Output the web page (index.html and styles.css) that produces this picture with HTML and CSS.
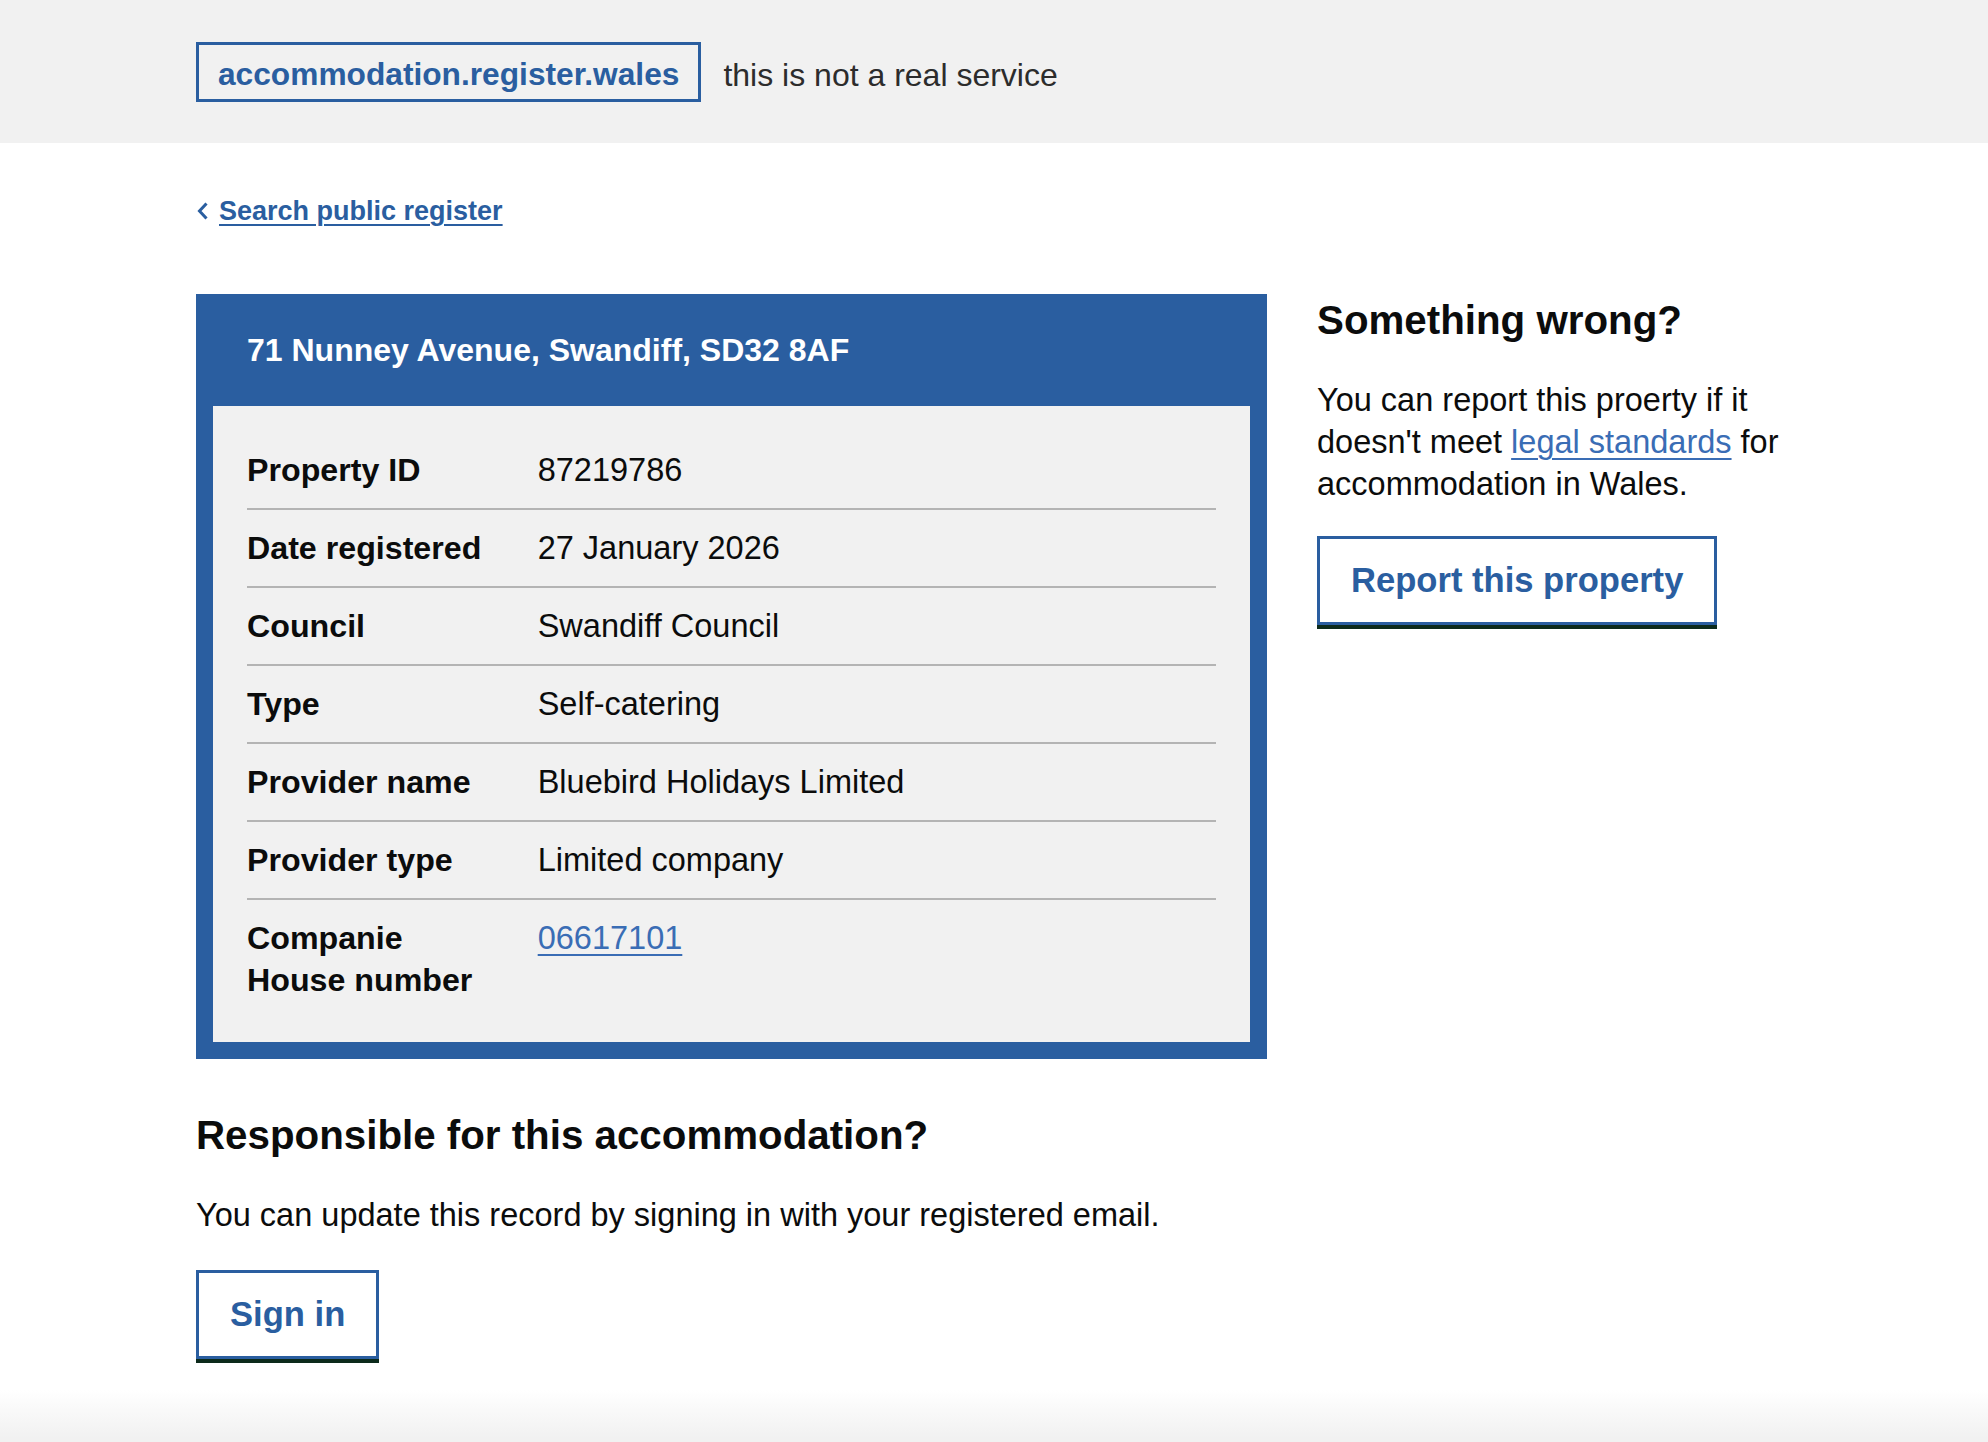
FILE: index.html
```html
<!DOCTYPE html>
<html lang="en">
<head>
<meta charset="utf-8">
<title>71 Nunney Avenue, Swandiff, SD32 8AF</title>
<link rel="stylesheet" href="styles.css">
</head>
<body>
<header class="site-header">
  <div class="container header-inner">
    <a class="logo" href="#">accommodation.register.wales</a>
    <span class="tagline">this is not a real service</span>
  </div>
</header>
<main class="container">
  <a class="back-link" href="#"><svg class="chevron" width="13" height="22" viewBox="0 0 13 22" aria-hidden="true"><polyline points="10.5,3.5 3.5,11 10.5,18.5" fill="none" stroke="#2a5ea0" stroke-width="3"/></svg><span class="back-text">Search public register</span></a>
  <div class="layout">
    <div class="main-col">
      <section class="card">
        <h1 class="card-title">71 Nunney Avenue, Swandiff, SD32 8AF</h1>
        <dl class="summary">
          <div class="row"><dt>Property ID</dt><dd>87219786</dd></div>
          <div class="row"><dt>Date registered</dt><dd>27 January 2026</dd></div>
          <div class="row"><dt>Council</dt><dd>Swandiff Council</dd></div>
          <div class="row"><dt>Type</dt><dd>Self-catering</dd></div>
          <div class="row"><dt>Provider name</dt><dd>Bluebird Holidays Limited</dd></div>
          <div class="row"><dt>Provider type</dt><dd>Limited company</dd></div>
          <div class="row last"><dt>Companie House number</dt><dd><a class="link" href="#">06617101</a></dd></div>
        </dl>
      </section>
      <h2 class="heading heading-gap">Responsible for this accommodation?</h2>
      <p class="body">You can update this record by signing in with your registered email.</p>
      <a class="button" href="#">Sign in</a>
    </div>
    <aside class="side-col">
      <h2 class="heading">Something wrong?</h2>
      <p class="body side-body">You can report this proerty if it doesn't meet <a class="link" href="#">legal standards</a> for accommodation in Wales.</p>
      <a class="button" href="#">Report this property</a>
    </aside>
  </div>
</main>
<footer class="site-footer"></footer>
</body>
</html>
```

FILE: styles.css
```css
html, body {
  margin: 0;
  padding: 0;
  background: #ffffff;
}

body {
  font-family: "Liberation Sans", Arial, Helvetica, sans-serif;
  color: #0b0c0c;
}

.container {
  width: 1596px;
  margin: 0 auto;
}

.site-header {
  background: #f1f1f1;
  height: 143px;
}

.header-inner {
  height: 143px;
  display: flex;
  align-items: center;
}

.logo {
  display: inline-block;
  border: 3px solid #2a5ea0;
  padding: 8px 19px 4px 19px;
  font-weight: 700;
  font-size: 31.7px;
  line-height: 42px;
  color: #2a5ea0;
  text-decoration: none;
}

.tagline {
  margin-left: 22px;
  padding-top: 6px;
  font-size: 32px;
  line-height: 42px;
  color: #2c2c2c;
}

.back-link {
  display: inline-flex;
  align-items: center;
  margin-top: 51px;
  font-weight: 700;
  font-size: 27px;
  line-height: 34px;
  color: #2a5ea0;
  text-decoration: none;
}

.chevron {
  display: block;
  margin-right: 10px;
}

.back-text {
  text-decoration: underline;
  text-decoration-thickness: 2px;
  text-underline-offset: 4px;
}

.layout {
  display: grid;
  grid-template-columns: 1071px 1fr;
  column-gap: 50px;
  align-items: start;
  margin-top: 66px;
}

.card {
  background: #2a5ea0;
  padding: 0 17px 17px 17px;
}

.card-title {
  margin: 0;
  padding: 35px 34px;
  font-size: 32px;
  line-height: 42px;
  font-weight: 700;
  color: #ffffff;
}

.summary {
  margin: 0;
  background: #f1f1f1;
  padding: 26px 34px 24px 34px;
}

.row {
  display: grid;
  grid-template-columns: 30% 70%;
  padding: 17px 0;
  border-bottom: 2px solid #b4b4b4;
}

.row.last {
  border-bottom: none;
}

.row dt {
  font-weight: 700;
  font-size: 32.2px;
  line-height: 42px;
  padding-right: 40px;
}

.row dd {
  margin: 0;
  font-size: 32.5px;
  line-height: 42px;
}

.link {
  color: #3a6db5;
  text-decoration: underline;
  text-decoration-thickness: 2px;
  text-underline-offset: 5px;
}

.side-col {
  padding-top: 2px;
}

.heading {
  margin: 0;
  font-size: 40.3px;
  line-height: 50px;
  font-weight: 700;
}

.heading-gap {
  margin-top: 52px;
}

.body {
  margin: 33px 0 34px 0;
  font-size: 32.5px;
  line-height: 42px;
}

.side-body {
  margin-bottom: 31px;
}

.button {
  display: inline-block;
  border: 3px solid #2a5ea0;
  padding: 21px 31px 22px 31px;
  font-size: 34.6px;
  line-height: 40px;
  font-weight: 700;
  color: #2a5ea0;
  background: #ffffff;
  text-decoration: none;
  box-shadow: 0 4px 0 #0c2a1b;
}

.site-footer {
  margin-top: 31px;
  height: 120px;
  background: linear-gradient(to bottom, #ffffff 0, #f1f1f1 48px, #f1f1f1 100%);
}
```
